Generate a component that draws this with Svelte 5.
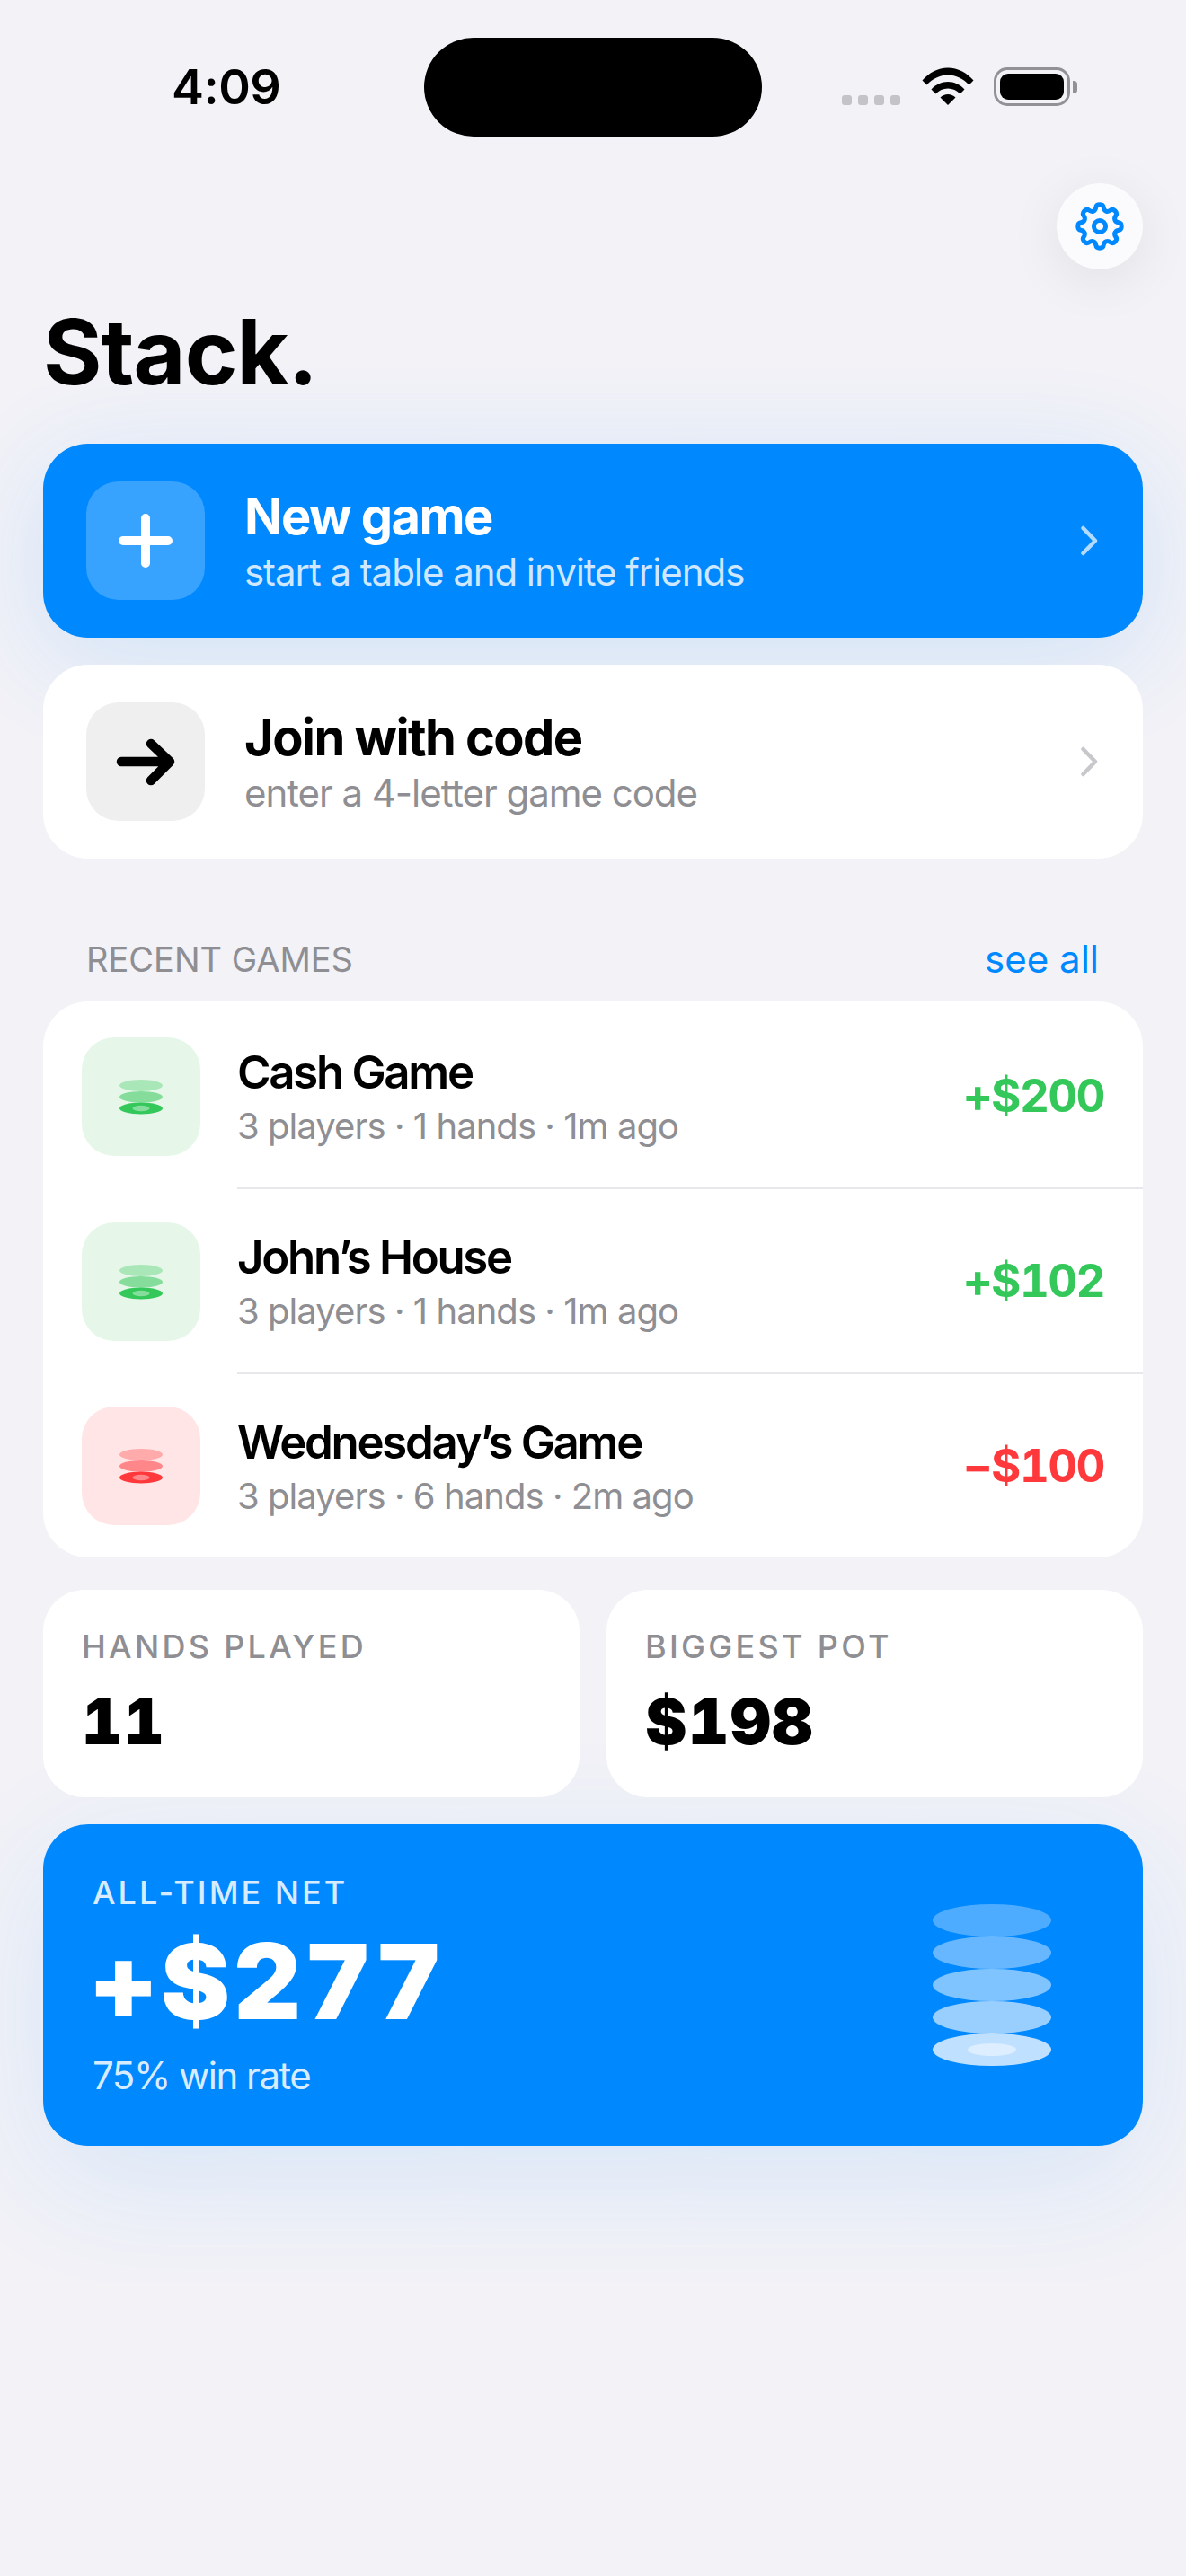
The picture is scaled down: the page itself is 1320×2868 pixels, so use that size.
<script>
  const games = [
    { name: "Cash Game", meta: "3 players · 1 hands · 1m ago", amount: "+$200", tone: "up" },
    { name: "John’s House", meta: "3 players · 1 hands · 1m ago", amount: "+$102", tone: "up" },
    { name: "Wednesday’s Game", meta: "3 players · 6 hands · 2m ago", amount: "−$100", tone: "down" }
  ];

  const stats = [
    { label: "HANDS PLAYED", value: "11" },
    { label: "BIGGEST POT", value: "$198" }
  ];

  // white chips, getting more solid towards the bottom of the pile
  const bigChips = [0.3, 0.4, 0.5, 0.6, 0.75];

  // 8 tooth gear outline with softened corners
  function gearPath(cx, cy, outer, inner) {
    const pts = [];
    for (let i = 0; i < 8; i++) {
      const a = (i * 45 - 90) * Math.PI / 180;
      for (const [r, d] of [[inner, -14.5], [outer, -9], [outer, 9], [inner, 14.5]]) {
        const t = a + d * Math.PI / 180;
        pts.push([cx + r * Math.cos(t), cy + r * Math.sin(t)]);
      }
    }
    const mid = (p, q) => [(p[0] + q[0]) / 2, (p[1] + q[1]) / 2];
    const f = (n) => n.toFixed(2);
    const start = mid(pts[pts.length - 1], pts[0]);
    let d = `M${f(start[0])} ${f(start[1])}`;
    pts.forEach((p, i) => {
      const m = mid(p, pts[(i + 1) % pts.length]);
      d += `Q${f(p[0])} ${f(p[1])} ${f(m[0])} ${f(m[1])}`;
    });
    return d + "Z";
  }

  const gear = gearPath(30, 30, 24.5, 18.5);
</script>

<div class="page">
  <div class="status">
    <div class="time">4:09</div>
    <div class="island"></div>
    <div class="sys">
      <div class="dots"><i></i><i></i><i></i><i></i></div>
      <svg class="wifi" width="58" height="42" viewBox="0 0 58 42">
        <path d="M0.5 14.5 C8 6 18 0.5 29 0.5 C40 0.5 50 6 57.5 14.5 L52.5 19.5 C46 12.5 38 8.5 29 8.5 C20 8.5 12 12.5 5.5 19.5 Z" fill="#000" />
        <path d="M10.5 24.5 C15.5 19 22 16 29 16 C36 16 42.5 19 47.5 24.5 L42.5 29.5 C39 25.8 34.3 23.6 29 23.6 C23.7 23.6 19 25.8 15.5 29.5 Z" fill="#000" />
        <path d="M20.5 33.5 C22.8 31.2 25.8 30 29 30 C32.2 30 35.2 31.2 37.5 33.5 L29 42 Z" fill="#000" />
      </svg>
      <div class="battery">
        <div class="cell"></div>
      </div>
      <div class="nub"></div>
    </div>
  </div>

  <div class="top">
    <button class="gear-btn" aria-label="Settings">
      <svg width="60" height="60" viewBox="0 0 60 60" fill="none" stroke="#0088ff" stroke-width="5" stroke-linejoin="round">
        <path d={gear} />
        <circle cx="30" cy="30" r="6.5" />
      </svg>
    </button>
  </div>

  <h1>Stack.</h1>

  <div class="action primary">
    <div class="tile">
      <svg width="132" height="132" viewBox="0 0 132 132" fill="none" stroke="#fff" stroke-width="10" stroke-linecap="round">
        <path d="M66 41 V 91 M41 66 H91" />
      </svg>
    </div>
    <div class="action-text">
      <div class="action-title">New game</div>
      <div class="action-sub">start a table and invite friends</div>
    </div>
    <svg class="chev" width="20" height="34" viewBox="0 0 20 34" fill="none" stroke="currentColor" stroke-width="4.5" stroke-linecap="round" stroke-linejoin="round">
      <path d="M3.5 3 L17 17 L3.5 31" />
    </svg>
  </div>

  <div class="action">
    <div class="tile">
      <svg width="132" height="132" viewBox="0 0 132 132" fill="none" stroke="#000" stroke-width="10.5" stroke-linecap="round" stroke-linejoin="round">
        <path d="M39 66 H93 M72 46 L93 66 L72 87" />
      </svg>
    </div>
    <div class="action-text">
      <div class="action-title">Join with code</div>
      <div class="action-sub">enter a 4-letter game code</div>
    </div>
    <svg class="chev" width="20" height="34" viewBox="0 0 20 34" fill="none" stroke="currentColor" stroke-width="4.5" stroke-linecap="round" stroke-linejoin="round">
      <path d="M3.5 3 L17 17 L3.5 31" />
    </svg>
  </div>

  <div class="section-head">
    <span class="section-title">RECENT GAMES</span>
    <span class="see-all">see all</span>
  </div>

  <div class="list">
    {#each games as game, i}
      <div class="row {game.tone}">
        <div class="chip-tile">
          <svg width="48" height="39" viewBox="0 0 48 39">
            <ellipse class="chip" cx="24" cy="6.5" rx="24" ry="6.4" opacity="0.34" />
            <ellipse class="chip" cx="24" cy="19.3" rx="24" ry="6.4" opacity="0.54" />
            <ellipse class="chip" cx="24" cy="32" rx="24" ry="6.4" />
            <ellipse cx="24" cy="32" rx="9.5" ry="3.2" fill="#fff" opacity="0.4" />
          </svg>
        </div>
        <div class="row-main" class:last={i === games.length - 1}>
          <div class="row-text">
            <div class="row-name">{game.name}</div>
            <div class="row-meta">{game.meta}</div>
          </div>
          <div class="row-amount">{game.amount}</div>
        </div>
      </div>
    {/each}
  </div>

  <div class="stats">
    {#each stats as stat}
      <div class="stat">
        <div class="stat-label">{stat.label}</div>
        <div class="stat-value">{stat.value}</div>
      </div>
    {/each}
  </div>

  <div class="net">
    <div class="net-text">
      <div class="net-label">ALL-TIME NET</div>
      <div class="net-value">+$277</div>
      <div class="net-sub">75% win rate</div>
    </div>
    <svg width="132" height="180" viewBox="0 0 132 180">
      {#each bigChips as alpha, i}
        <ellipse cx="66" cy={18 + i * 36} rx="66" ry="18" fill="#fff" opacity={alpha} />
      {/each}
      <ellipse cx="66" cy="162" rx="27" ry="7" fill="#fff" opacity="0.45" />
    </svg>
  </div>
</div>

<style>
  :global(body) {
    margin: 0;
    background: #f2f2f7;
  }

  .page {
    min-height: 2868px;
    box-sizing: border-box;
    padding: 0 48px;
    background: #f2f2f7;
    font-family: Inter, "Liberation Sans", sans-serif;
    color: #000;
    overflow: hidden;
  }

  .status {
    display: grid;
    grid-template-columns: 424px 376px 1fr;
    height: 204px;
    align-items: start;
  }

  .time {
    padding: 65px 0 0 143px;
    font-size: 54px;
    line-height: 64px;
    font-weight: 600;
    letter-spacing: -0.5px;
  }

  .island {
    margin-top: 42px;
    height: 110px;
    border-radius: 55px;
    background: #000;
  }

  .sys {
    display: flex;
    align-items: flex-start;
    padding: 75px 0 0 89px;
  }

  .dots {
    display: flex;
    gap: 7px;
    margin-top: 31px;
  }

  .dots i {
    width: 11px;
    height: 11px;
    border-radius: 3px;
    background: #c4c4c8;
  }

  .wifi {
    margin-left: 24px;
  }

  .battery {
    box-sizing: border-box;
    margin-left: 22px;
    width: 85px;
    height: 43px;
    padding: 4px;
    border: 3px solid #929296;
    border-radius: 15px;
  }

  .cell {
    height: 100%;
    border-radius: 9px;
    background: #000;
  }

  .nub {
    width: 5px;
    height: 14px;
    margin: 15px 0 0 3px;
    border-radius: 0 4px 4px 0;
    background: #929296;
  }

  .top {
    display: flex;
    justify-content: flex-end;
  }

  .gear-btn {
    display: flex;
    align-items: center;
    justify-content: center;
    width: 96px;
    height: 96px;
    padding: 0;
    border: 0;
    border-radius: 50%;
    background: #fbfbfe;
    box-shadow: 0 12px 60px rgba(0, 0, 0, 0.08);
  }

  h1 {
    margin: 32px 0 42px;
    font-size: 100px;
    line-height: 120px;
    font-weight: 700;
    letter-spacing: -1px;
  }

  .action {
    display: flex;
    align-items: center;
    height: 216px;
    box-sizing: border-box;
    padding: 0 48px;
    margin-bottom: 30px;
    border-radius: 50px;
    background: #fff;
    color: #000;
  }

  .action.primary {
    background: #0088ff;
    color: #fff;
    box-shadow: 0 24px 120px rgba(0, 136, 255, 0.14);
  }

  .tile {
    flex: none;
    width: 132px;
    height: 132px;
    border-radius: 36px;
    background: #efefef;
  }

  .primary .tile {
    background: rgba(255, 255, 255, 0.22);
  }

  .action-text {
    flex: 1;
    margin-left: 44px;
  }

  .action-title {
    font-size: 56px;
    line-height: 64px;
    font-weight: 700;
    letter-spacing: -1.6px;
  }

  .action-sub {
    margin-top: 5px;
    font-size: 42px;
    line-height: 50px;
    letter-spacing: -1.05px;
    color: #8e8e93;
  }

  .primary .action-sub {
    color: rgba(255, 255, 255, 0.82);
  }

  .chev {
    color: #c7c7cc;
    margin-right: 2px;
  }

  .primary .chev {
    color: rgba(255, 255, 255, 0.7);
  }

  .section-head {
    display: flex;
    justify-content: space-between;
    margin: 87px 0 22px;
    padding: 0 49px 0 48px;
    line-height: 50px;
  }

  .section-title {
    font-size: 38px;
    color: #8e8e93;
  }

  .see-all {
    font-size: 42px;
    color: #0088ff;
  }

  .list {
    padding-top: 3px;
    border-radius: 50px;
    background: #fff;
  }

  .row {
    display: flex;
    align-items: center;
    padding-left: 43px;
    --tone: #34c759;
    --tone-bg: #e6f7ea;
  }

  .row.down {
    --tone: #ff383c;
    --tone-bg: #ffe5e6;
  }

  .chip-tile {
    flex: none;
    display: flex;
    align-items: center;
    justify-content: center;
    width: 132px;
    height: 132px;
    border-radius: 36px;
    background: var(--tone-bg);
  }

  .chip {
    fill: var(--tone);
  }

  .row-main {
    flex: 1;
    display: flex;
    align-items: center;
    justify-content: space-between;
    box-sizing: border-box;
    height: 206px;
    margin-left: 41px;
    padding: 2px 43px 0 0;
    border-bottom: 2px solid #e8e8ec;
  }

  .row-main.last {
    height: 204px;
    border-bottom: 0;
  }

  .row-name {
    font-size: 51px;
    line-height: 60px;
    font-weight: 600;
    letter-spacing: -2.3px;
  }

  .row-meta {
    margin-top: 5px;
    font-size: 40px;
    line-height: 50px;
    letter-spacing: -0.95px;
    color: #8e8e93;
  }

  .row-amount {
    padding-bottom: 3px;
    font-size: 51px;
    font-weight: 700;
    letter-spacing: -1.6px;
    font-variant-numeric: tabular-nums;
    color: var(--tone);
  }

  .stats {
    display: grid;
    grid-template-columns: 1fr 1fr;
    gap: 30px;
    margin: 36px 0 30px;
  }

  .stat {
    height: 231px;
    box-sizing: border-box;
    padding: 41px 43px 0;
    border-radius: 46px;
    background: #fff;
  }

  .stat-label {
    font-size: 36px;
    line-height: 44px;
    font-weight: 500;
    letter-spacing: 3.3px;
    color: #8e8e93;
  }

  .stat-value {
    margin-top: 20px;
    font-size: 70px;
    line-height: 84px;
    font-weight: 900;
    letter-spacing: 1.5px;
    font-variant-numeric: tabular-nums;
  }

  .net {
    display: flex;
    align-items: center;
    justify-content: space-between;
    height: 358px;
    box-sizing: border-box;
    padding: 0 102px 0 55px;
    border-radius: 50px;
    background: #0088ff;
    color: #fff;
    box-shadow: 0 36px 144px rgba(0, 136, 255, 0.11);
  }

  .net-label {
    font-size: 36px;
    line-height: 44px;
    font-weight: 500;
    letter-spacing: 3px;
    color: rgba(255, 255, 255, 0.85);
  }

  .net-value {
    margin-top: 12px;
    margin-left: -3px;
    font-size: 116px;
    line-height: 130px;
    font-weight: 900;
    letter-spacing: 4px;
    font-variant-numeric: tabular-nums;
  }

  .net-sub {
    margin-top: 15px;
    font-size: 42px;
    line-height: 50px;
    letter-spacing: -1.5px;
    color: rgba(255, 255, 255, 0.85);
  }
</style>
